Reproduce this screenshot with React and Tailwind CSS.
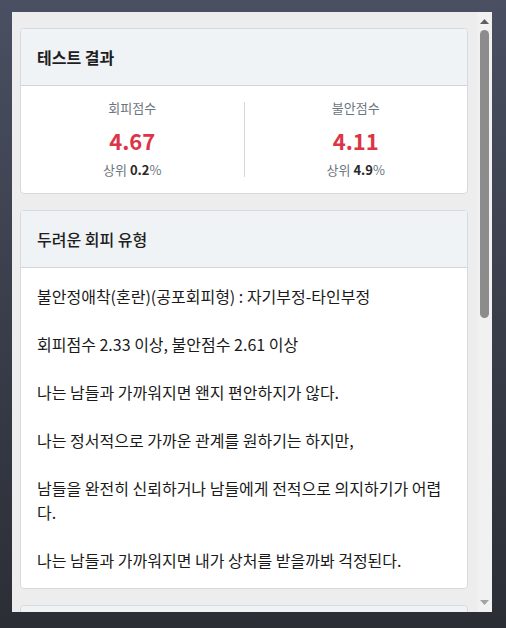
import React from 'react';

const FONT = { fontFamily: '"Noto Sans CJK KR", "Noto Sans", sans-serif' };

const scores = [
  { label: '회피점수', value: '4.67', rank: '0.2' },
  { label: '불안점수', value: '4.11', rank: '4.9' },
];

const lines = [
  '불안정애착(혼란)(공포회피형) : 자기부정-타인부정',
  '회피점수 2.33 이상, 불안점수 2.61 이상',
  '나는 남들과 가까워지면 왠지 편안하지가 않다.',
  '나는 정서적으로 가까운 관계를 원하기는 하지만,',
  '남들을 완전히 신뢰하거나 남들에게 전적으로 의지하기가 어렵다.',
  '나는 남들과 가까워지면 내가 상처를 받을까봐 걱정된다.',
];

const Card = ({ title, bold, children }) => (
  <div className="shrink-0 bg-white border border-[#d6d9de] rounded-[4px] overflow-hidden">
    <div className={`h-[57px] flex items-center px-4 bg-[#f0f3f6] border-b border-[#d3d7dd] text-[16px] text-[#1e1e1e] ${bold ? 'font-bold' : 'font-medium'}`}>
      {title}
    </div>
    {children}
  </div>
);

const App = () => {
  return (
    <div className="w-[506px] h-[628px] bg-gradient-to-b from-[#4a4f62] to-[#2b2e35] pt-3 pl-3" style={FONT}>
      <div className="w-[480px] h-[600px] bg-[#ededed] flex overflow-hidden">
        <div className="flex-1 overflow-hidden pt-4 pl-2 pr-[9px] flex flex-col gap-4">
          <Card title="테스트 결과" bold>
            <div className="flex pt-3 pb-[13px]">
              {scores.map((s, i) => (
                <React.Fragment key={s.label}>
                  {i === 1 && <div className="w-px bg-[#d3d7dd] mt-1 mb-[3px]" />}
                  <div className="flex-1 flex flex-col items-center">
                    <div className="text-[13px] leading-5 text-[#6c757d]">{s.label}</div>
                    <div className="text-[22px] leading-[34px] font-bold text-[#dc3545] mt-[5px]">{s.value}</div>
                    <div className="text-[13px] leading-5 text-[#6c757d] mt-[3px]">
                      상위 <span className="font-bold text-[#2a2a2a]">{s.rank}</span>%
                    </div>
                  </div>
                </React.Fragment>
              ))}
            </div>
          </Card>
          <Card title="두려운 회피 유형">
            <div className="p-4 text-[16px] leading-6 text-[#1a1a1a] flex flex-col gap-6">
              {lines.map((l) => (
                <p key={l}>{l}</p>
              ))}
            </div>
          </Card>
          <Card title="" />
        </div>
        <div className="w-[15px] bg-[#f1f1f1] flex flex-col items-center">
          <div className="h-[17px] flex items-center justify-center pt-[2px]">
            <svg width="9" height="5" viewBox="0 0 9 5"><path d="M0 5 L4.5 0 L9 5 Z" fill="#5f5f5f" /></svg>
          </div>
          <div className="w-[9px] h-[288px] mt-[1px] rounded-full bg-[#8c8c8c]" />
          <div className="flex-1" />
          <div className="h-[17px] flex items-center justify-center pb-[2px]">
            <svg width="9" height="5" viewBox="0 0 9 5"><path d="M0 0 L4.5 5 L9 0 Z" fill="#a3a3a3" /></svg>
          </div>
        </div>
      </div>
    </div>
  );
};

export default App;
